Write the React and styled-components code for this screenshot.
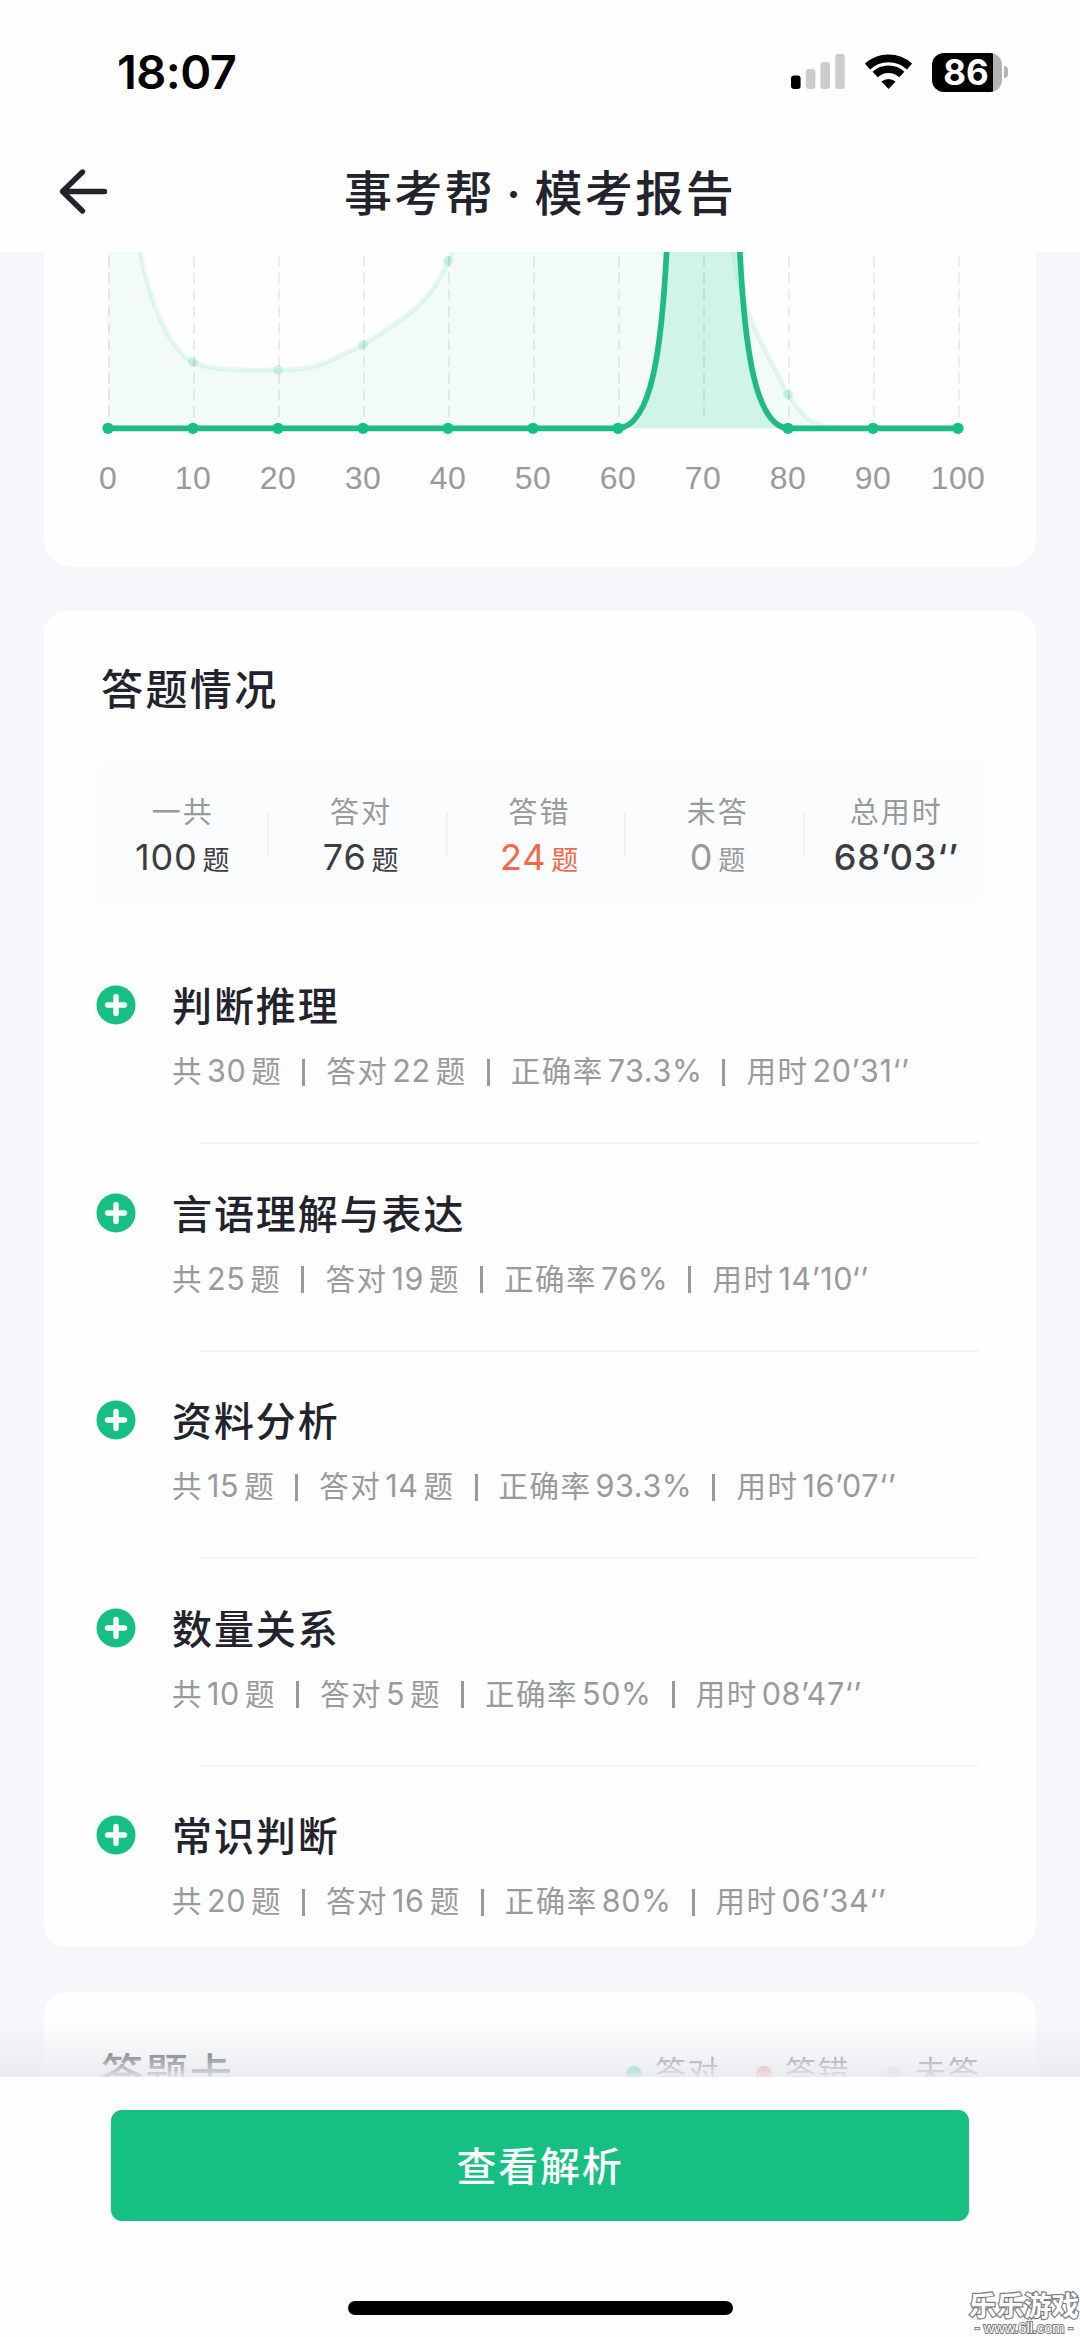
import React from "react";
import styled, { createGlobalStyle } from "styled-components";

const GlobalStyle = createGlobalStyle`
  * {
    box-sizing: border-box;
  }

  body {
    margin: 0;
    background: #fefefe;
    font-family: Inter, "Noto Sans CJK SC", sans-serif;
    color: #22232c;
  }
`;

const Page = styled.div`
  position: relative;
  display: flex;
  flex-direction: column;
  width: 1080px;
  height: 2337px;
  overflow: hidden;
  background: #f6f7fa;
`;

const Header = styled.header`
  flex: none;
  height: 252px;
  background: #fefefe;
`;

const StatusBar = styled.div`
  display: flex;
  align-items: center;
  justify-content: space-between;
  height: 144px;
  padding: 0 72px 0 117px;
`;

const Clock = styled.div`
  padding-bottom: 2px;
  font-size: 47px;
  font-weight: 600;
  letter-spacing: -0.6px;
  color: #000;
`;

const StatusIcons = styled.div`
  display: flex;
  align-items: center;
  gap: 20px;
`;

const Battery = styled.div`
  display: flex;
  align-items: center;
  gap: 2px;
`;

const BatteryBody = styled.div`
  width: 70px;
  height: 39px;
  padding-right: 2px;
  border-radius: 12px;
  background: linear-gradient(to right, #000 61px, #b3b3b3 61px);
  color: #fff;
  font-size: 35px;
  font-weight: 700;
  line-height: 39px;
  text-align: center;
`;

const BatteryCap = styled.div`
  width: 4px;
  height: 12px;
  border-radius: 0 6px 6px 0;
  background: #b3b3b3;
`;

const NavBar = styled.div`
  display: grid;
  grid-template-columns: 60px 1fr 60px;
  align-items: center;
  height: 96px;
  padding: 0 57px;
`;

const NavTitle = styled.h1`
  margin: 0;
  padding-bottom: 5px;
  font-size: 48px;
  font-weight: 500;
  letter-spacing: 2.4px;
  word-spacing: -4px;
  text-align: center;
  white-space: nowrap;
`;

const Content = styled.main`
  flex: 1;
  display: flex;
  flex-direction: column;
  min-height: 0;
  padding: 0 44px;
  overflow: hidden;
`;

const Card = styled.section`
  flex: none;
  height: ${(props) => props.height}px;
  margin-bottom: ${(props) => (props.cut ? 44 : 45)}px;
  padding: ${(props) => props.padding || "0"};
  border-radius: ${(props) => (props.cut ? "0 0 28px 28px" : "22px")};
  background: #fefefe;
`;

const CardTitle = styled.h2`
  margin: 0;
  font-size: 42px;
  font-weight: 500;
  line-height: 60px;
  letter-spacing: 2.4px;
`;

const Stats = styled.div`
  display: flex;
  width: 890px;
  height: 149px;
  margin: 39px 0 0 -5px;
  padding-right: 1px;
  border-radius: 14px;
  background: #fafcfe;
`;

const Stat = styled.div`
  flex: none;
  width: 178.4px;
  display: flex;
  flex-direction: column;
  align-items: center;
  padding-top: 32px;
  color: ${(props) => props.color || "#3c3d40"};
  background: ${(props) => (props.last ? "none" : "linear-gradient(#ededf0, #ededf0) no-repeat right 3px top 53px / 1.5px 44px")};

  &:first-child {
    margin-left: -2.5px;
  }
`;

const StatLabel = styled.div`
  font-size: 29px;
  line-height: 44px;
  letter-spacing: 2px;
  color: #999a9c;
`;

const StatValue = styled.div`
  display: flex;
  align-items: baseline;
  gap: 5px;
  font-size: 36px;
  font-weight: ${(props) => (props.strong ? 500 : 400)};
  line-height: 45px;
  letter-spacing: 0.8px;

  & > span {
    font-size: 27px;
  }
`;

const SubjectList = styled.div`
  margin-top: 68px;
`;

const Subject = styled.div`
  display: flex;
  align-items: flex-start;
  height: 207.5px;
`;

const SubjectBody = styled.div`
  flex: 1;
  margin-left: 36px;
`;

const SubjectName = styled.h3`
  margin: 0;
  padding-top: 2px;
  font-size: 40px;
  font-weight: 500;
  line-height: 58px;
  letter-spacing: 1.9px;
`;

const SubjectInfo = styled.div`
  display: flex;
  align-items: center;
  margin-top: 13px;
  font-size: 29.5px;
  line-height: 44px;
  letter-spacing: 1.5px;
  color: #999a9c;
  white-space: nowrap;
`;

const Num = styled.span`
  margin: 0 ${(props) => (props.end ? 0 : 5)}px 0 4px;
  font-size: 30.5px;
  letter-spacing: 0.6px;
`;

const Bar = styled.i`
  width: 3px;
  height: 27px;
  margin: 2px 21px 0 20px;
  background: #999a9c;
`;

const Divider = styled.div`
  height: 2px;
  margin: 49px 0 0 27px;
  width: 780px;
  background: #f4f5f7;
`;

const PlusIcon = styled.svg`
  flex: none;
  width: 40px;
  height: 40px;
  margin: 9px 0 0 -5px;
`;

const CardHead = styled.div`
  display: flex;
  justify-content: space-between;
  align-items: center;
`;

const Legend = styled.div`
  display: flex;
  gap: 36px;
`;

const LegendItem = styled.div`
  display: flex;
  align-items: center;
  gap: 13px;
  font-size: 31px;
  line-height: 44px;
  letter-spacing: 1.5px;
  padding-bottom: 4px;
  color: #66676b;

  &::before {
    content: "";
    width: 16px;
    height: 16px;
    margin-top: 4px;
    border-radius: 50%;
    background: ${(props) => props.dot};
  }
`;

const Footer = styled.footer`
  position: relative;
  flex: none;
  display: flex;
  flex-direction: column;
  align-items: center;
  height: 260px;
  padding-top: 33px;
  background: #fefefe;

  &::before {
    content: "";
    position: absolute;
    left: 0;
    right: 0;
    bottom: 100%;
    height: 56px;
    background: linear-gradient(rgba(236, 237, 240, 0), rgba(234, 235, 239, 0.93));
  }
`;

const Button = styled.button`
  width: 858px;
  height: 111px;
  padding: 0 0 3px;
  border: none;
  border-radius: 11px;
  background: #15c082;
  color: #fff;
  font-family: inherit;
  font-size: 40px;
  font-weight: 500;
  letter-spacing: 1.8px;
`;

const HomeIndicator = styled.div`
  width: 385px;
  height: 14px;
  margin-top: 80px;
  border-radius: 7px;
  background: #000;
`;

const Watermark = styled.div`
  position: absolute;
  right: 1px;
  bottom: 2px;
  text-align: center;
  white-space: nowrap;
  color: #fff;
  paint-order: stroke fill;

  & > b {
    display: block;
    font-size: 27.5px;
    font-weight: 700;
    line-height: 30px;
    -webkit-text-stroke: 2.4px #7d7d7d;
  }

  & > small {
    display: block;
    font-family: "Liberation Sans", sans-serif;
    font-size: 14.5px;
    line-height: 14px;
    -webkit-text-stroke: 2px #7d7d7d;
  }
`;

const LINE_Y = 176.3;
const ticks = [0, 10, 20, 30, 40, 50, 60, 70, 80, 90, 100];
const tickX = (value) => 64 + value * 8.5;

const everyone =
  "M64 -60 C76 -60 86 -30 96 0 C106 50 124 96 149 110 C170 120 205 118 234 118 C275 119 285 108 319 93 C350 72 386 56 404 9 C420 -30 440 -60 480 -60 L660 -60 C675 -50 684 -20 690 0 C696 60 722 98 744 142.5 C760 166 768 173 790 176.3";
const mineUp = "M574 176.3 C608 174 618 96 623 -8";
const mineDown = "M695.5 -8 C700 90 710 174 744 176.3";

const ScoreChart = () => (
  <svg width="992" height="315" viewBox="0 0 992 315">
    <path d={`${everyone} L64 ${LINE_Y} Z`} fill="#15c082" fillOpacity="0.05" />
    <path d={everyone} fill="none" stroke="#15c082" strokeOpacity="0.1" strokeWidth="5" />
    {[[149, 110], [234, 118], [319, 93], [404, 9], [744, 142.5]].map(([x, y]) => (
      <circle key={x} cx={x} cy={y} r="5" fill="#15c082" fillOpacity="0.16" />
    ))}
    <path
      d="M574 176.3 C608 174 618 96 623 -8 L695.5 -8 C700 90 710 174 744 176.3 Z"
      fill="#20d690"
      fillOpacity="0.16"
    />
    {ticks.map((value) => (
      <line
        key={value}
        x1={tickX(value) + 1}
        x2={tickX(value) + 1}
        y1="4"
        y2="170"
        stroke="#000"
        strokeOpacity="0.07"
        strokeWidth="2"
        strokeDasharray="11 5.67"
      />
    ))}
    <g fill="none" stroke="#1fbb83" strokeWidth="5.7">
      <path d={mineUp} />
      <path d={mineDown} />
      <path d={`M64 ${LINE_Y} H575 M743 ${LINE_Y} H914`} />
    </g>
    {ticks.filter((value) => value !== 70).map((value) => (
      <circle key={value} cx={tickX(value)} cy={LINE_Y} r="5.6" fill="#15c082" />
    ))}
    {ticks.map((value) => (
      <text
        key={value}
        x={tickX(value)}
        y="237"
        textAnchor="middle"
        fontFamily="Liberation Sans, Arial, sans-serif"
        fontSize="32"
        letterSpacing="0.4"
        fill="#999a9c"
      >
        {value}
      </text>
    ))}
  </svg>
);

const SignalIcon = () => (
  <svg width="54" height="36" viewBox="0 0 54 36">
    <rect x="0" y="21.5" width="9.6" height="13.5" rx="3" fill="#000" />
    <rect x="14.8" y="15" width="9.6" height="20" rx="3" fill="#ccc" />
    <rect x="29.4" y="8" width="9.6" height="27" rx="3" fill="#ccc" />
    <rect x="44.2" y="0" width="9.6" height="35" rx="3" fill="#ccc" />
  </svg>
);

const WifiIcon = () => (
  <svg width="47" height="36" viewBox="0 0 47 36">
    <path d="M2.5 12.6 A31.2 31.2 0 0 1 44.5 12.6" fill="none" stroke="#000" strokeWidth="7.8" />
    <path d="M10.2 20.6 A19.4 19.4 0 0 1 36.8 20.6" fill="none" stroke="#000" strokeWidth="7.6" />
    <path d="M23.5 35 L16.4 27.4 A11.3 11.3 0 0 1 30.6 27.4 Z" fill="#000" />
  </svg>
);

const BackIcon = () => (
  <svg width="54" height="48" viewBox="0 0 54 48">
    <path
      d="M25.5 4 L5.5 23.5 L25.5 43 M6 23.5 H47.5"
      fill="none"
      stroke="#22232c"
      strokeWidth="5.4"
      strokeLinecap="round"
      strokeLinejoin="round"
    />
  </svg>
);

const stats = [
  { label: "一共", value: "100", unit: "题" },
  { label: "答对", value: "76", unit: "题" },
  { label: "答错", value: "24", unit: "题", color: "#f2694c" },
  { label: "未答", value: "0", unit: "题", color: "#999a9c" },
  { label: "总用时", value: "68’03‘’", strong: true },
];

const subjects = [
  { name: "判断推理", total: 30, right: 22, rate: "73.3%", time: "20’31‘’" },
  { name: "言语理解与表达", total: 25, right: 19, rate: "76%", time: "14’10‘’" },
  { name: "资料分析", total: 15, right: 14, rate: "93.3%", time: "16’07‘’" },
  { name: "数量关系", total: 10, right: 5, rate: "50%", time: "08’47‘’" },
  { name: "常识判断", total: 20, right: 16, rate: "80%", time: "06’34‘’" },
];

const SubjectRow = ({ subject, last }) => {
  const { name, total, right, rate, time } = subject;
  return (
    <Subject>
      <PlusIcon viewBox="0 0 40 40">
        <circle cx="20" cy="20" r="19.5" fill="#15c082" />
        <path d="M20 11.5 V28.5 M11.5 20 H28.5" stroke="#fff" strokeWidth="5.4" strokeLinecap="round" />
      </PlusIcon>
      <SubjectBody>
        <SubjectName>{name}</SubjectName>
        <SubjectInfo>
          共<Num>{total}</Num>题
          <Bar />
          答对<Num>{right}</Num>题
          <Bar />
          正确率<Num end>{rate}</Num>
          <Bar />
          用时<Num end>{time}</Num>
        </SubjectInfo>
        {last ? null : <Divider />}
      </SubjectBody>
    </Subject>
  );
};

const App = () => (
  <Page>
    <GlobalStyle />
    <Header>
      <StatusBar>
        <Clock>18:07</Clock>
        <StatusIcons>
          <SignalIcon />
          <WifiIcon />
          <Battery>
            <BatteryBody>86</BatteryBody>
            <BatteryCap />
          </Battery>
        </StatusIcons>
      </StatusBar>
      <NavBar>
        <BackIcon />
        <NavTitle>事考帮 · 模考报告</NavTitle>
      </NavBar>
    </Header>
    <Content>
      <Card cut height={315}>
        <ScoreChart />
      </Card>
      <Card height={1336} padding="49px 56px 0 57px">
        <CardTitle>答题情况</CardTitle>
        <Stats>
          {stats.map((item, index) => (
            <Stat key={item.label} color={item.color} last={index === stats.length - 1}>
              <StatLabel>{item.label}</StatLabel>
              <StatValue strong={item.strong}>
                {item.value}
                {item.unit ? <span>{item.unit}</span> : null}
              </StatValue>
            </Stat>
          ))}
        </Stats>
        <SubjectList>
          {subjects.map((subject, index) => (
            <SubjectRow key={subject.name} subject={subject} last={index === subjects.length - 1} />
          ))}
        </SubjectList>
      </Card>
      <Card height={400} padding="52px 56px 0 57px">
        <CardHead>
          <CardTitle>答题卡</CardTitle>
          <Legend>
            <LegendItem dot="#15c082">答对</LegendItem>
            <LegendItem dot="#f2694c">答错</LegendItem>
            <LegendItem dot="#d5d6da">未答</LegendItem>
          </Legend>
        </CardHead>
      </Card>
    </Content>
    <Footer>
      <Button>查看解析</Button>
      <HomeIndicator />
    </Footer>
    <Watermark>
      <b>乐乐游戏</b>
      <small>- www.6ll.com -</small>
    </Watermark>
  </Page>
);

export default App;
